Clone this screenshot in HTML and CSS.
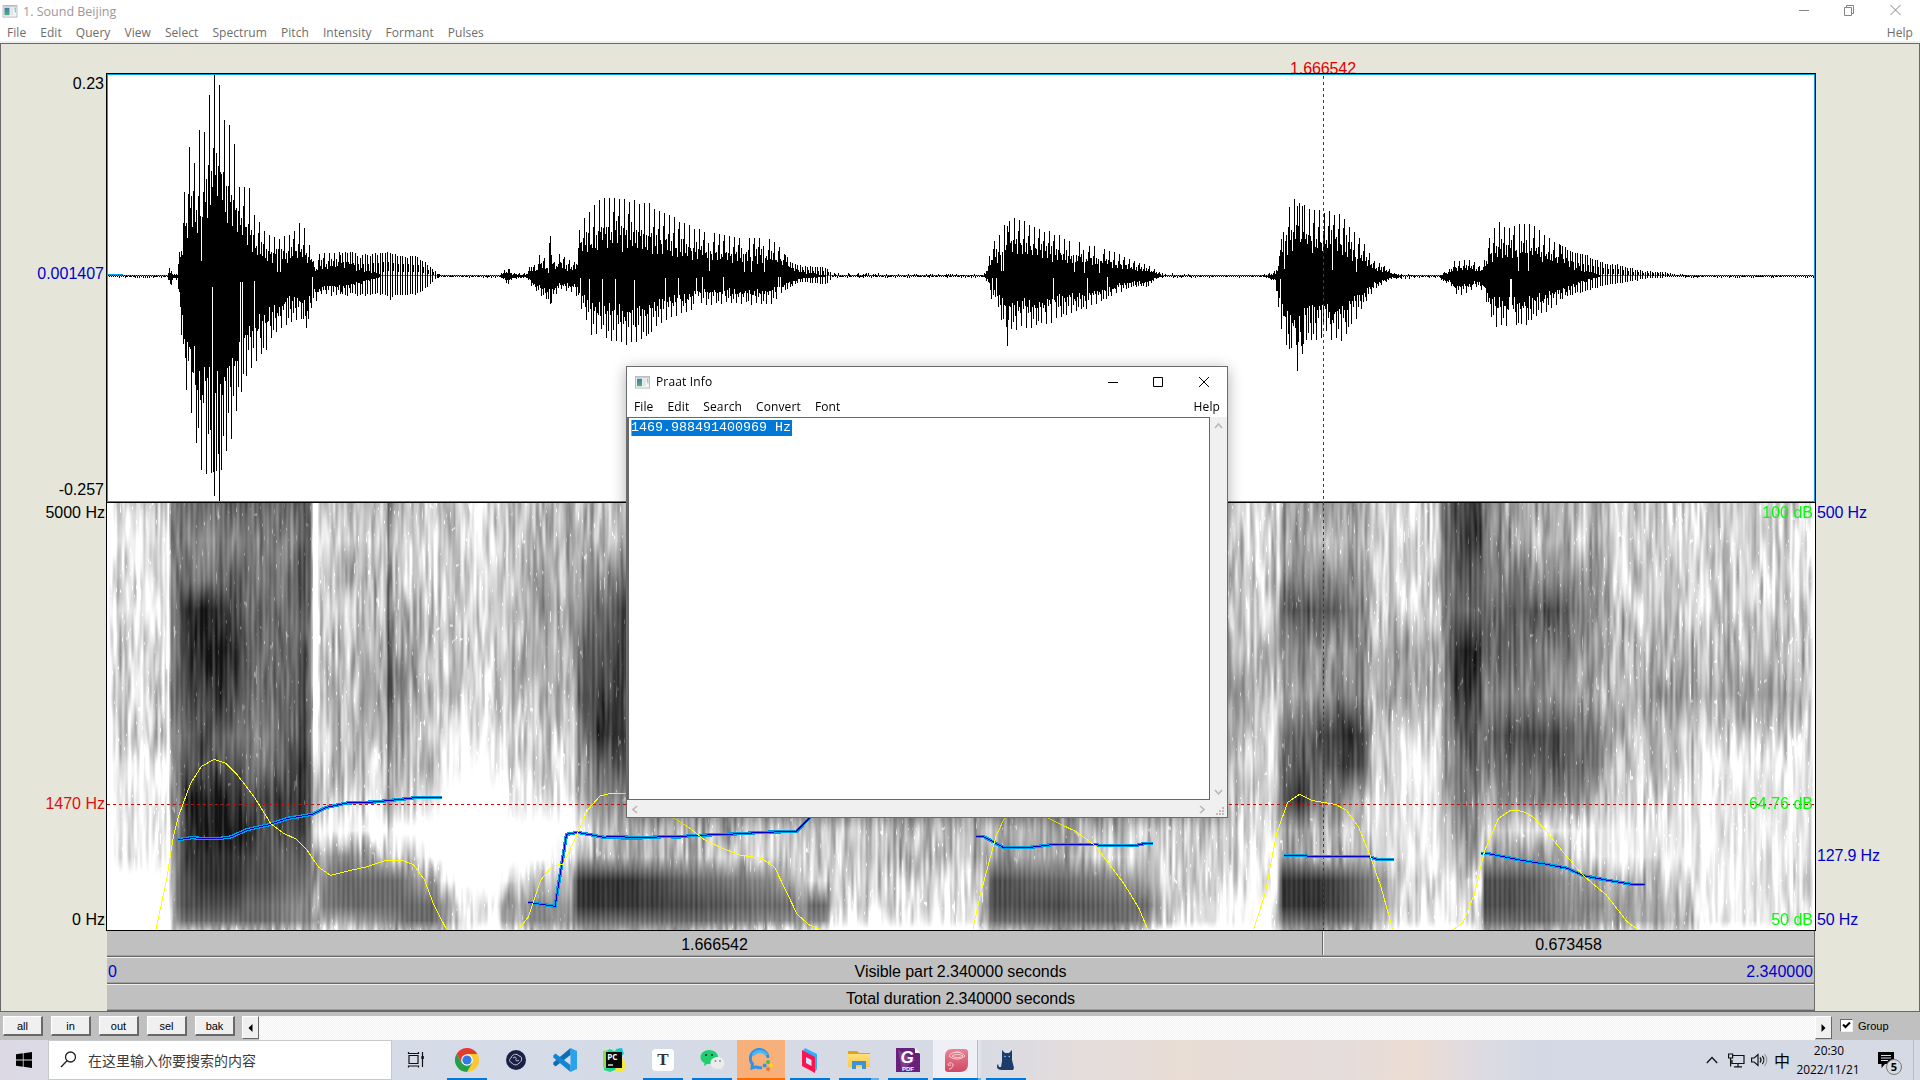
FILE: index.html
```html
<!DOCTYPE html>
<html lang="zh-CN">
<head>
<meta charset="utf-8">
<title>1. Sound Beijing</title>
<link rel="stylesheet" href="styles.css">
</head>
<body>
<svg class="defs" width="0" height="0">
  <defs>
    <linearGradient id="screenGrad" x1="0" y1="0" x2="0" y2="1"><stop offset="0" stop-color="#4a78a8"/><stop offset="1" stop-color="#4fae86"/></linearGradient>
    <linearGradient id="folder" x1="0" y1="0" x2="0" y2="1"><stop offset="0" stop-color="#ffe07a"/><stop offset="1" stop-color="#fcc84a"/></linearGradient>
    <linearGradient id="pink" x1="0" y1="0" x2="0" y2="1"><stop offset="0" stop-color="#ea8292"/><stop offset="1" stop-color="#cf4a66"/></linearGradient>
    <symbol id="appicon" viewBox="0 0 16 14">
      <rect x=".5" y=".5" width="15" height="12.5" fill="#f3f5f5" stroke="#b4b8bb"/>
      <rect x="1" y="1" width="14" height="1.4" fill="#c9ced2"/>
      <rect x="2" y="3" width="5.5" height="8" fill="url(#screenGrad)"/>
      <rect x="8.5" y="3" width="3" height="8" fill="#dfe6e6"/>
      <path d="M12.5 3h1.8v5h-.8z" fill="#8cc1b4"/>
    </symbol>
  </defs>
</svg>

<header class="titlebar">
  <svg class="appicon" width="16" height="13"><use href="#appicon"/></svg>
  <span class="title">1. Sound Beijing</span>
  <svg class="winctl" width="104" height="12" viewBox="0 0 104 12" fill="none" stroke="#858585">
    <path d="M1 6.500h10M46.500 3.500h7v8h-7zM48.500 3.500v-2h7v8h-2M92.500 1l10 10M102.500 1l-10 10"/>
  </svg>
</header>
<nav class="menubar">
  <span>File</span><span>Edit</span><span>Query</span><span>View</span><span>Select</span><span>Spectrum</span><span>Pitch</span><span>Intensity</span><span>Formant</span><span>Pulses</span><span class="help">Help</span>
</nav>

<main class="editor">
  <div class="axis left">
    <div class="scale wave-scale"><span>0.23</span><span class="blue">0.001407</span><span>-0.257</span></div>
    <div class="scale spec-scale"><span>5000 Hz</span><span class="red freq">1470 Hz</span><span>0 Hz</span></div>
  </div>
  <div class="centre">
    <div class="cursor-time"><span>1.666542</span></div>
    <div class="plots">
      <canvas id="wave" width="1710" height="430"></canvas>
      <canvas id="spec" width="1710" height="428"></canvas>
      <svg class="tracks" viewBox="106 73 1710 858" width="1710" height="858" fill="none" shape-rendering="crispEdges">
        <path d="M107.500 74.500H1814.500V501.500H107.500z" stroke="#00a2e8"/>
        <path d="M106.500 930.500V73.500H1815.500V930.500zM106 502.500H1816" stroke="#000"/>
        <path d="M107 804.500H1815" stroke="#e00000" stroke-dasharray="3 3"/>
        <path d="M1323.500 76V930" stroke="#d40000" stroke-dasharray="3 3"/>
        <g transform="translate(0 480) scale(.40816 .33333)">
          <path class="halo" d="M437 1079L470 1073 490 1075 540 1075 565 1071 605 1049 660 1034 705 1015 765 1003 800 982 850 969 915 966 975 959 1025 952 1082 952M1294 1267L1360 1279 1388 1063 1415 1057 1480 1072 1568 1075"/>
          <path class="core" d="M437 1079L470 1073 490 1075 540 1075 565 1071 605 1049 660 1034 705 1015 765 1003 800 982 850 969 915 966 975 959 1025 952 1082 952M1294 1267L1360 1279 1388 1063 1415 1057 1480 1072 1568 1075"/>
          <path class="loud" d="M382 1348L408 1200 424 1075 437 1010 467 910 493 860 524 838 553 850 580 882 625 955 664 1032 695 1060 725 1077 752 1110 781 1162 810 1186 855 1172 900 1160 945 1141 985 1141 1013 1154 1040 1200 1063 1275 1094 1348M1271 1348L1295 1310 1325 1200 1353 1158 1380 1152 1415 1060 1440 990 1470 948 1495 940 1533 940"/>
        </g>
        <g transform="translate(560 760) scale(.43367 .33333)">
          <path class="halo" d="M105 231H150L180 234 240 230 275 231 300 227 400 222 470 217 545 214 577 172M960 229L977 230 1022 262 1085 262 1140 253 1230 253 1245 256 1330 256 1350 250 1368 250"/>
          <path class="core" d="M105 231H150L180 234 240 230 275 231 300 227 400 222 470 217 545 214 577 172M960 229L977 230 1022 262 1085 262 1140 253 1230 253 1245 256 1330 256 1350 250 1368 250"/>
          <path class="loud" d="M240 160L262 174 300 205 335 241 375 265 415 285 465 295 495 322 520 390 547 463 575 495 597 507 615 508M952 508L970 400 1005 230 1025 174M1125 174L1190 215 1235 258 1300 370 1335 445 1355 508 1370 508"/>
        </g>
        <g transform="translate(1200 480) scale(.45918 .33333)">
          <path class="halo" d="M183 1126L230 1127 235 1129 365 1129 385 1138 423 1138M612 1120L625 1120 700 1141 755 1153 800 1165 835 1187 880 1199 940 1213 970 1213"/>
          <path class="core" d="M183 1126L230 1127 235 1129 365 1129 385 1138 423 1138M612 1120L625 1120 700 1141 755 1153 800 1165 835 1187 880 1199 940 1213 970 1213"/>
          <path class="loud" d="M117 1348L142 1240 167 1060 191 967 217 943 245 962 295 973 318 990 345 1040 370 1125 395 1225 420 1350M550 1350L573 1328 598 1240 620 1112 650 1015 677 990 702 994 725 1010 750 1047 790 1115 835 1187 885 1245 930 1325 955 1350"/>
        </g>
      </svg>
      <div class="scale spec-scale db"><span>100 dB</span><span class="freq">64.76 dB</span><span>50 dB</span></div>
    </div>
    <div class="timebars">
      <div class="bar split"><span>1.666542</span><span>0.673458</span></div>
      <div class="bar whole"><span class="blue">0</span><span>Visible part 2.340000 seconds</span><span class="blue end">2.340000</span></div>
      <div class="bar"><span>Total duration 2.340000 seconds</span></div>
    </div>
  </div>
  <div class="axis right">
    <div class="scale spec-scale blue"><span>500 Hz</span><span class="f0">127.9 Hz</span><span>50 Hz</span></div>
  </div>
</main>

<section class="controls">
  <button>all</button><button>in</button><button>out</button><button>sel</button><button>bak</button>
  <div class="scroll">
    <i class="arrow"><svg width="5" height="8"><path d="M4.500 0v8L.5 4z"/></svg></i>
    <div class="track"></div>
    <i class="arrow"><svg width="5" height="8"><path d="M.5 0v8l4-4z"/></svg></i>
  </div>
  <label class="group"><span class="check"><svg width="9" height="9" viewBox="0 0 9 9"><path d="M1 3.500l2.500 2.500L8 1.500" fill="none" stroke="#000" stroke-width="2"/></svg></span>Group</label>
</section>

<footer class="taskbar">
  <div class="start"><svg width="16" height="16"><path d="M0 2.300l6.800-1v6.300H0zM7.600 1.200L16 0v7.600H7.600zM0 8.400h6.800v6.300L0 13.700zM7.600 8.400H16V16l-8.400-1.200z"/></svg></div>
  <div class="search">
    <svg width="17" height="17" fill="none" stroke="#222" stroke-width="1.300"><circle cx="10.500" cy="6" r="5"/><path d="M7 9.700L1 16"/></svg>
    <span>在这里输入你要搜索的内容</span>
  </div>
  <div class="task view"><svg width="18" height="18" viewBox="0 0 18 18" fill="none" stroke="#111" stroke-width="1.200"><path d="M2 4.500h9v8H2zM1.500 1v1.500h10V1M1.500 16.500V15h10v1.500M15.500 1v15"/><rect x="14.400" y="5" width="2.400" height="3" fill="#111" stroke="none"/></svg></div>
  <div class="tasks">
    <div class="task run"><svg width="24" height="24" viewBox="0 0 24 24"><path d="M22.400 6A12 12 0 0 1 12 24L17.200 15 17.200 9 12 6z" fill="#fcc934"/><path d="M1.600 6A12 12 0 0 0 12 24L17.200 15H12L6.800 15z" fill="#24a148"/><path d="M12 6h10.400A12 12 0 0 0 1.600 6l5.200 9z" fill="#e33b2e"/><circle cx="12" cy="12" r="5.800" fill="#fff"/><circle cx="12" cy="12" r="4.600" fill="#2f7bea"/></svg></div>
    <div class="task"><svg width="22" height="22" viewBox="0 0 22 22" fill="none"><circle cx="11" cy="11" r="10" fill="#1a2145"/><path d="M6 9c1-4 6-5 8-2 4 0 3 6 0 7-2 3-6 2-7 0-3-1-3-4-1-5z" stroke="#c5cae0"/><path d="M8 9c2-2 4 0 3 1s1 3 3 1" stroke="#c5cae0"/></svg></div>
    <div class="task"><svg width="24" height="24" viewBox="0 0 24 24"><path d="M17.500 0L24 3v18l-6.500 3z" fill="#29a3ec"/><path d="M17.500 0v7L2.500 18.500.3 16.600v-2z" fill="#0b6db5"/><path d="M17.500 24v-7L2.500 5.500.3 7.400v2z" fill="#1286d4"/></svg></div>
    <div class="task"><svg width="24" height="24" viewBox="0 0 24 24"><path d="M1 4l7-3 4 2 6-3 3 6-2 4 4 8-3 5-7-1-5 2-6-2z" fill="#21d789"/><path d="M1 3l5-1-2 19-3-2z" fill="#8be04a"/><path d="M16 8l6 3 2 8-3 5-8-1z" fill="#f3ea3a"/><path d="M14 1l6-1 2 6-5 2z" fill="#15c5d8"/><rect x="4" y="4" width="16" height="16" fill="#080808"/><text x="5.200" y="12" class="pc">PC</text><path d="M6 17h5" stroke="#fff" stroke-width="1.300"/></svg></div>
    <div class="task run"><span class="typora">T</span></div>
    <div class="task run"><svg width="25" height="22" viewBox="0 0 25 22"><path d="M9 1c5 0 9 3 9 7s-3 7-9 7l-2 0-3 2 .5-3C2 13 .5 11 .5 8c0-4 4-7 8.500-7z" fill="#1fcf6d"/><circle cx="6" cy="6" r="1.100" fill="#135"/><circle cx="12" cy="6" r="1.100" fill="#135"/><path d="M17.500 8c4 0 7 2.500 7 6 0 2-1 3.500-2.500 4.500l.4 2.300-2.400-1.200c-6 1.400-9.500-1.600-9.500-5.600 0-3.500 3-6 7-6z" fill="#ececec"/><circle cx="15.500" cy="12" r=".9" fill="#888"/><circle cx="20" cy="12" r=".9" fill="#888"/></svg></div>
    <div class="task run alert"><svg width="25" height="24" viewBox="0 0 25 24" fill="none"><path d="M13 19.500c-2 .5-4 .3-6-.7L3 20l.5-4A8.800 8.800 0 1 1 19 10" stroke="#2f93ea" stroke-width="3"/><path d="M4 7a8.800 8.800 0 0 1 14 0" stroke="#45b8f5" stroke-width="3"/><circle cx="19" cy="14" r="2" fill="#49c14a"/><circle cx="22.300" cy="17.500" r="2" fill="#ffcf29"/><circle cx="19" cy="21" r="2" fill="#f4742b"/><circle cx="15.700" cy="17.500" r="2" fill="#2f93ea"/></svg></div>
    <div class="task run"><svg width="18" height="25" viewBox="0 0 18 25"><path d="M1 4L4 0l12 6v15l-3 4z" fill="#2bb2ff"/><path d="M1 2l13 7v16L1 18z" fill="#ff1450"/><path d="M5 9l5.500 3v6L5 15z" fill="#cfeaff"/></svg></div>
    <div class="task run many"><svg width="22" height="20" viewBox="0 0 22 20"><path d="M0 1h9l2 2h11v4H0z" fill="#e0a21b"/><path d="M0 4h22v13H0z" fill="url(#folder)"/><path d="M4 19v-8h14v8h-4v-4H8v4z" fill="#3c94d8"/></svg></div>
    <div class="task run"><svg width="24" height="24" viewBox="0 0 24 24"><path d="M0 0h18l6 6v18H0z" fill="#68217a"/><path d="M2 2l17 10L6 22z" fill="#823d92"/><path d="M19 0l5 5h-5z" fill="#fff"/><text x="4.500" y="15" class="foxg">G</text><text x="6" y="23" class="foxp">PDF</text></svg></div>
    <div class="task run active"><svg width="23" height="23" viewBox="0 0 23 23"><path d="M7 0h13c2 0 3 1 3 3v12c0 5-3 8-8 8H3c-2 0-3-1-3-3V8c0-5 2-8 7-8z" fill="url(#pink)"/><g fill="none" stroke="#fbd0d6"><path d="M4 7c3-5 12-5 16 0-4 4-12 4-16 0zM7 7c3-2 8-2 11 0-3 2-8 2-11 0zM9 4c3-2 6-1 7 0"/><path d="M4 20c4 0 2-2 4-3 1-3-4-5-5-1 1 1 2 0 3 0"/></g></svg></div>
    <div class="task run"><svg width="17" height="20" viewBox="0 0 17 20"><path d="M5 0l3 3h4l3-3v10l2 8-1 2H5c-3 0-5-1-5-3 0-1 0-2 1-3l1 3 2 0 1-6z" fill="#1c3d69"/><circle cx="8" cy="6.500" r=".8" fill="#8fd0ff"/><circle cx="12.300" cy="6.500" r=".8" fill="#8fd0ff"/></svg></div>
  </div>
  <div class="tray">
    <svg width="12" height="8" fill="none" stroke="#111" stroke-width="1.300"><path d="M.8 7L6 1.500 11.200 7"/></svg>
    <svg width="17" height="15" fill="none" stroke="#111" stroke-width="1.200"><path d="M5 2.500h11v8H4V7M10 10.500v3M6 13.800h8M.6 1h4v4h-4zM2.600 5v8.500"/></svg>
    <svg width="17" height="14" fill="none" stroke="#111" stroke-width="1.200"><path d="M.6 5h2.600L7 1.500v11L3.200 9H.6zM9 4.500c1.300 1.500 1.300 3.500 0 5M11.300 3c2 2.300 2 5.700 0 8"/><path d="M13.500 1.200c3 3.200 3 8.400 0 11.600" stroke="#999"/></svg>
    <span class="ime">中</span>
    <div class="clock"><span>20:30</span><span>2022/11/21</span></div>
    <div class="notes"><svg width="17" height="16"><path d="M0 0h16v12H7l-3.500 4v-4H0z"/><path d="M3 3.500h10M3 6h10M3 8.500h7" stroke="#dde"/></svg><b>5</b></div>
  </div>
</footer>

<section class="dialog">
  <header>
    <svg class="appicon" width="15" height="13"><use href="#appicon"/></svg>
    <span>Praat Info</span>
    <svg class="winctl" width="98" height="12" viewBox="0 0 98 12" fill="none" stroke="#000"><path d="M0 6.500h10M45.500 1.500h9v9h-9zM91 1l10 10M101 1l-10 10" transform="translate(-5 0)"/></svg>
  </header>
  <nav><span>File</span><span>Edit</span><span>Search</span><span>Convert</span><span>Font</span><span class="help">Help</span></nav>
  <div class="body">
    <div class="text"><mark>1469.988491400969 Hz</mark></div>
    <div class="vbar"><svg width="9" height="6"><path d="M1 5l3.500-4L8 5"/></svg><svg width="9" height="6"><path d="M1 1l3.500 4L8 1"/></svg></div>
    <div class="hbar"><svg width="6" height="9"><path d="M5 1L1 4.500 5 8"/></svg><svg width="6" height="9"><path d="M1 1l4 3.500L1 8"/></svg></div>
    <div class="grip"><svg width="9" height="9" fill="#bdbdbd"><path d="M6 0h2v2H6zM3 3h2v2H3zM6 3h2v2H6zM0 6h2v2H0zM3 6h2v2H3zM6 6h2v2H6z"/></svg></div>
  </div>
</section>
<script src="plot.js"></script>
</body>
</html>
```

FILE: styles.css
```css
* { box-sizing: border-box; }
body { margin: 0; width: 1920px; height: 1080px; overflow: hidden; display: flex; flex-direction: column; background: #fff; font: 12px/16px "Open Sans", "Noto Sans CJK SC", sans-serif; position: relative; }
.defs { position: absolute; }
svg, canvas { display: block; flex: none; }

.titlebar { height: 22px; display: flex; align-items: center; padding: 0 20px 0 2px; color: #999; }
.title { margin-left: 5px; font-size: 12.5px; padding-top: 2px; }
.titlebar .winctl { margin-left: auto; margin-right: -2px; margin-bottom: 2px; }
.menubar { height: 21px; display: flex; gap: 14px; padding: 3px 7px 0; color: #6d6d6d; border-bottom: 2px solid #f0f0f0; letter-spacing: .06px; }
.help { margin-left: auto; }

.editor { height: 969px; display: grid; grid-template-columns: 105px 1710px 1fr; background: #e5e6d9; border: 1px solid #696969; font: 16px/18px "Liberation Sans", Arial, sans-serif; color: #000; }
.blue { color: #0000cd; }
.red { color: #dc1010; }
.axis { padding-top: 30px; }
.scale { display: flex; flex-direction: column; justify-content: space-between; }
.left .scale { align-items: flex-end; padding-right: 2px; }
.wave-scale { height: 428px; padding-bottom: 3px; }
.wave-scale .blue { margin-bottom: 27px; }
.spec-scale { height: 428px; padding: 1px 0 1px; position: relative; }
.left .spec-scale { padding-right: 1px; }
.spec-scale .freq, .spec-scale .f0 { position: absolute; top: 293px; }
.left .freq { right: 1px; }
.left .scale span:first-child { margin-top: 1px; }
.spec-scale .f0 { top: 344px; }
.right { padding: 459px 0 0 1px; }
.right .scale { letter-spacing: -.15px; padding-bottom: 2px; }
.cursor-time { height: 29px; overflow: hidden; padding: 16px 0 0 1184px; color: #e00000; letter-spacing: -.1px; }
.cursor-time span { display: block; }
.plots { position: relative; background: #fff; }
.tracks { position: absolute; left: 0; top: 0; }
.tracks path { vector-effect: non-scaling-stroke; }
.halo { stroke: #00a0e6; stroke-width: 3.4px; }
.core { stroke: #0000c8; stroke-width: 1px; }
.loud { stroke: #ffff00; stroke-width: 1px; }
.db { position: absolute; right: 3px; top: 430px; padding-bottom: 2px; align-items: flex-end; color: #00ff00; }
.db .freq { right: 0; top: 292px; white-space: nowrap; }
.timebars { margin-left: 1px; background: #c0c0c0; height: 80px; width: 1708px; border-right: 1px solid #696969; }
.bar { height: 27px; text-align: center; line-height: 23px; border-bottom: 1px solid #696969; box-shadow: inset 0 -1px #a0a0a0, 0 1px #f0f0f0; letter-spacing: -.08px; }
.bar:first-child { height: 26px; letter-spacing: 0; }
.bar:last-child { box-shadow: inset 0 -1px #a0a0a0; }
.bar.split { display: grid; grid-template-columns: 1216px 1fr; line-height: 28px; }
.split span:first-child { border-right: 1px solid #696969; box-shadow: 1px 0 #f0f0f0; height: 24px; }
.bar:not(.split) { padding-top: 3px; }
.whole { display: grid; grid-template-columns: 100px 1fr 100px; }
.whole .blue { text-align: left; padding-left: 1px; letter-spacing: 0; }
.whole .blue.end { text-align: right; padding-right: 1px; }

.controls { height: 28px; background: #c0c0c0; display: flex; padding: 4px 0 0 3px; font: 11px/16px "Liberation Sans", Arial, sans-serif; }
.controls button { width: 40px; height: 20px; margin: 0 8px 0 0; padding: 0; font: inherit; line-height: 16px; background: #f0f0f0; border: 2px solid; border-color: #fff #696969 #696969 #fff; border-width: 1px 2px 2px 1px; color: #000; }
.scroll { display: flex; width: 1590px; margin-left: -1px; }
.arrow { width: 17px; height: 23px; background: #f0f0f0; border: 1px solid; border-color: #fff #696969 #696969 #fff; display: grid; place-items: center; }
.track { flex: 1; height: 24px; background: repeating-conic-gradient(#fff 0 25%, #f1f1f1 0 50%) 0 0 / 2px 2px; }
.group { display: flex; align-items: flex-start; gap: 5px; margin-left: 8px; padding-top: 2px; }
.check { width: 13px; height: 13px; margin-top: 1px; background: #fff; border: 1px solid; border-color: #696969 #eee #eee #696969; display: grid; place-items: center; }

.taskbar { height: 40px; display: flex; background: linear-gradient(90deg, #dcd9e4 0, #d5dce7 400px, #d5dae5 960px, #e2dcdd 1060px, #e9ddd5 1180px, #e4dcdb 1340px, #ecddd3 1410px, #dddbe2 1480px, #d3d8e4 1540px, #d6dae4 100%); }
.start { width: 48px; padding: 12px 0 0 16px; }
.search { width: 344px; background: #fff; border: 1px solid #c6c8cc; display: flex; align-items: center; gap: 11px; padding-left: 11px; font: 14px/20px "Noto Sans CJK SC", sans-serif; color: #3c3c3c; }
.search svg { margin-bottom: 2px; }
.task { width: 48px; height: 40px; display: grid; place-items: center; position: relative; }
.view { margin-right: 3px; }
.tasks { display: flex; gap: 1px; }
.run::after { content: ""; position: absolute; left: 4px; right: 4px; bottom: 0; height: 2px; background: #0078d7; }
.alert { background: #f7b07a; }
.alert::after { left: 0; right: 0; background: #ff6d00; }
.many::after { right: 4px; background: linear-gradient(90deg, #0078d7 32px, #66aee6 32px); }
.active { background: linear-gradient(90deg, #eef0f5 44px, #b9bec8 44px 45px, #dfe3ea 45px); }
.active::after { left: 0; right: 0; background: linear-gradient(90deg, #0078d7 45px, #66aee6 45px); }
.active svg { margin-right: 1px; }
.tasks .task:last-child svg { margin-right: 2px; }
.typora { width: 22px; height: 22px; border-radius: 4px; background: #fff; font: bold 17px/22px "Liberation Serif", serif; text-align: center; color: #333; }
.pc { font: bold 8px "Open Sans", sans-serif; fill: #fff; }
.foxg { font: italic bold 17px "Liberation Sans", sans-serif; fill: #fff; }
.foxp { font: bold 6px "Liberation Sans", sans-serif; fill: #fff; }
.tray { margin-left: auto; width: 214px; display: flex; align-items: center; }
.tray > svg:nth-child(2) { margin-left: 10px; }
.tray > svg:nth-child(3) { margin-left: 6px; }
.ime { font: 16px/20px "Noto Sans CJK SC", sans-serif; margin-left: 6px; }
.clock { width: 66px; margin-left: 5px; display: flex; flex-direction: column; align-items: center; gap: 3px; font-size: 11.9px; white-space: nowrap; padding-bottom: 2px; }
.clock span:first-child { padding-left: 2px; }
.notes { position: relative; margin-left: 17px; width: 36px; height: 40px; padding-top: 12px; border-right: 1px solid #b8bcc6; }
.notes b { position: absolute; left: 8px; top: 19px; width: 16px; height: 16px; border-radius: 50%; border: 1px solid #777; background: #d9dbe2; font-size: 11px; line-height: 14px; text-align: center; }

.dialog { position: absolute; left: 626px; top: 366px; width: 602px; height: 452px; background: #fff; border: 1px solid #6c6c6c; box-shadow: 0 3px 14px rgba(0,0,0,.32); display: flex; flex-direction: column; color: #000; }
.dialog header { height: 30px; display: flex; align-items: center; padding: 0 16px 0 8px; letter-spacing: .15px; }
.dialog header span { margin-left: 6px; }
.dialog header .winctl { margin-left: auto; overflow: visible; }
.dialog nav { height: 20px; display: flex; gap: 14px; padding: 2px 7px 0; letter-spacing: .12px; }
.body { flex: 1; display: grid; grid-template: 384px 1fr / 583px 1fr; background: #f0f0f0; }
.text { background: #fff; border: 1px solid #696969; border-left-width: 2px; padding: 1px 0 0 2px; margin-bottom: 1px; }
mark { display: inline-block; background: #0078d7; color: #fff; font: 13.333px/16px "Liberation Mono", "Courier New", monospace; box-shadow: inset 1px 0 #ff8728; padding-right: 1px; height: 16px; }
.vbar { display: flex; flex-direction: column; justify-content: space-between; align-items: center; padding: 6px 0 6px; }
.hbar { display: flex; justify-content: space-between; align-items: center; padding: 0 5px 0 5px; }
.vbar path, .hbar path { fill: none; stroke: #b8b8b8; stroke-width: 1.6; }
.grip { display: flex; align-items: flex-end; justify-content: flex-end; padding: 0 2px 1px 0; }
```

FILE: plot.js
```js
// All x/y data below are in window pixels; the plot's origin is (OX, OY).
const OX = 106, OY = 73, ZERO = 276;

function hash(x, y) {
  let h = Math.imul(x, 374761393) + Math.imul(y, 668265263);
  h = Math.imul(h ^ (h >>> 13), 1274126177);
  return ((h ^ (h >>> 16)) >>> 0) / 4294967296;
}
function lerpTable(t, x) {
  let i = 0;
  while (i < t.length - 4 && t[i + 2] < x) i += 2;
  const f = Math.max(0, Math.min(1, (x - t[i]) / (t[i + 2] - t[i])));
  return t[i + 1] + (t[i + 3] - t[i + 1]) * f;
}

// ---- waveform: envelope above and below zero ----
const above = [107,1,167,1,169,8,171,8,173,2,177,4,179,25,184,88,189,129,194,116,199,146,204,146,209,181,214,203,219,191,224,158,229,151,234,132,238,90,249,89,252,62,258,60,262,46,268,44,277,38,290,43,299,54,304,48,307,32,312,32,314,9,319,23,350,25,360,21,389,26,400,22,418,20,427,12,436,4,442,1,495,1,500,3,508,9,512,3,526,3,531,13,536,10,540,26,546,15,550,40,554,15,560,25,565,18,575,14,580,58,590,65,598,77,608,82,622,79,650,73,660,65,680,57,695,48,720,44,735,40,770,39,780,29,790,15,800,11,825,9,832,3,880,2,980,1,985,4,988,16,992,35,998,40,1002,53,1013,61,1024,57,1035,50,1055,43,1070,36,1090,32,1110,26,1130,18,1140,13,1150,10,1160,3,1190,1,1262,1,1275,5,1279,20,1281,70,1287,62,1292,80,1298,77,1304,74,1315,66,1327,66,1337,64,1345,60,1350,50,1355,45,1361,38,1367,28,1373,17,1385,10,1392,4,1412,1,1438,1,1443,4,1450,8,1454,16,1472,16,1480,10,1485,18,1488,36,1493,47,1499,54,1510,50,1522,54,1535,53,1545,42,1560,32,1572,26,1590,20,1605,14,1620,12,1635,7,1645,5,1660,5,1672,2,1690,1,1815,1];
const below = [107,1,167,1,170,13,173,3,177,4,179,30,181,62,184,110,189,135,195,170,200,190,205,212,210,213,214,219,218,200,225,196,231,170,240,120,255,92,267,75,277,56,285,52,300,42,303,55,307,55,312,28,318,24,321,20,385,20,390,26,395,21,418,20,427,12,436,3,442,1,500,1,508,9,512,3,526,2,531,10,540,20,551,28,560,14,575,18,583,40,590,60,600,58,610,68,637,72,648,65,655,52,665,46,680,40,700,30,730,28,770,30,785,15,800,6,825,9,832,2,880,1,984,1,988,9,992,30,1000,42,1005,52,1012,55,1024,54,1040,52,1060,44,1090,32,1110,22,1130,12,1148,11,1155,3,1170,1,1262,1,1275,6,1280,55,1286,73,1292,75,1303,78,1308,65,1315,68,1325,60,1332,68,1345,65,1350,52,1360,38,1367,25,1373,15,1380,10,1390,3,1438,1,1443,6,1450,8,1455,20,1465,19,1475,12,1483,15,1488,37,1496,52,1510,50,1521,52,1530,48,1545,38,1553,32,1565,22,1580,18,1600,11,1615,8,1635,5,1650,2,1680,1,1815,1];
const hollow = [[340, 437], [785, 832], [1560, 1690]];
// single glottal spikes that stand out of the envelope: x, above, below
const spikes = [[189,129,60],[199,146,90],[209,181,90],[214,202,220],[219,191,226],[224,156,100],[229,151,90],[234,132,90],[550,40,28],[1007,50,70],[1297,70,95],[1289,40,73],[1302,70,78]];

const wave = document.getElementById('wave').getContext('2d');
wave.fillStyle = '#fff';
wave.fillRect(0, 0, 1710, 430);
wave.fillStyle = '#00a2e8';
wave.fillRect(0, 275 - OY, 1710, 1);
wave.fillRect(1, 274 - OY, 16, 1);
wave.fillStyle = '#000';
const upShape = [1, .48, .6, .38, .68], downShape = [.5, .62, 1, .55, .76];
for (let x = 108; x < 1814; x++) {
  const a = lerpTable(above, x), b = lerpTable(below, x);
  const open = hollow.find(r => x >= r[0] && x < r[1]);
  const p = (x + 1) % 5, r1 = hash(x, 1), r2 = hash(x, 2);
  let t, d;
  if (a < 3 && b < 3) {
    t = x % 2 ? 0 : 1;
    d = x % 2 ? 1 : 0;
    if (r1 < .25) t += a - .5;
    if (r2 < .25) d += b - .5;
  } else if (open) {
    // pulses separate gradually: the filled core shrinks over the first 45 px
    const q = x % 5, fill = Math.max(0, .55 * (1 - (x - open[0]) / 45));
    if (q === 0 || q === 2) {
      t = a * (.85 + .15 * r1);
      d = b * (.85 + .15 * r2);
    } else if (q === 3) {
      t = a * .55;
      d = b * (fill > .05 ? fill : -.2);
    } else {
      if (fill < .05) continue;
      t = a * fill * (.6 + .8 * r1);
      d = b * fill * (.8 + .8 * r2);
    }
  } else {
    t = a * (p === 0 ? .94 + .06 * r1 : upShape[p] * (.8 + .4 * r1));
    d = b * (p === 2 ? .9 + .1 * r2 : downShape[p] * (.8 + .4 * r2));
    if (a > 25 && r1 > .965) d = b * .05;
    if (a > 25 && r2 > .965) t = a * .1;
  }
  const y0 = Math.round(ZERO - t), y1 = Math.round(ZERO + d);
  wave.fillRect(x - OX, y0 - OY, 1, Math.max(1, y1 - y0));
}
for (const [x, up, down] of spikes) wave.fillRect(x - OX, ZERO - up - OY, 1, up + down);

// ---- spectrogram: energy (0-9) sampled on a coarse time/frequency grid ----
const rows = [503, 540, 580, 610, 650, 695, 735, 765, 800, 830, 856, 880, 905, 920, 930];
const grid = [
  [107,'000000000000000'],[110,'111111100000000'],[119,'212122211110000'],[165,'211122211110000'],[168,'000000000000000'],
  [171,'555555444433321'],[178,'656666555556653'],[185,'656887679887763'],[205,'656998779988763'],[225,'656898679988763'],
  [238,'656787678988763'],[245,'656676567877663'],[265,'655666557777663'],[290,'656666678766553'],[304,'767777788876553'],
  [310,'666666677665553'],[313,'000000012233342'],[317,'000000012233342'],[320,'323334332145542'],[345,'323233332156642'],
  [386,'323334322036653'],[388,'656677655336653'],[391,'545567544236653'],[394,'322344432026653'],[410,'322344332025663'],
  [432,'222333221003663'],[445,'222222110001442'],[460,'222222110000221'],[480,'222221100000110'],[495,'222222110000100'],
  [505,'332333221001441'],[515,'322333221001331'],[530,'334433221003553'],[545,'334443221003553'],[560,'333433211013442'],
  [570,'444443221013442'],[578,'344566543148864'],[600,'335678865338864'],[625,'336887874338864'],[700,'333333333336763'],
  [760,'333333333325652'],[790,'333333333234652'],[801,'333333333223442'],[810,'333333333222651'],[826,'333333333222651'],
  [833,'333333333222210'],[900,'333333333332210'],[975,'222222222332110'],[985,'333333333233431'],[992,'444444444347763'],
  [1060,'444444444336764'],[1120,'333333333325663'],[1147,'333333333234652'],[1158,'333333333222320'],[1195,'222222222222110'],
  [1230,'222234322222110'],[1268,'222233222111000'],[1276,'222233222211221'],[1282,'444654666458864'],[1300,'445754678448864'],
  [1320,'436745765338864'],[1345,'434645884237763'],[1362,'334555873236653'],[1372,'222333321125542'],[1385,'222244221114431'],
  [1400,'222244211112210'],[1438,'222233211112110'],[1442,'555544432221110'],[1455,'776687655432110'],[1467,'887698766541110'],
  [1480,'776687665431221'],[1484,'555665653247764'],[1510,'445665765247764'],[1545,'335755765146663'],[1560,'335755775135553'],
  [1575,'335654665124553'],[1600,'334443552114542'],[1610,'222333332113442'],[1640,'222234322113442'],[1690,'222234221112332'],
  [1702,'222234211111110'],[1790,'222234211111110'],[1806,'222233211112110'],[1811,'111112111111110'],[1815,'000000000000000']
];
function gridColumn(x) {
  let i = 0;
  while (i < grid.length - 2 && grid[i + 1][0] < x) i++;
  const a = grid[i], b = grid[i + 1];
  const f = Math.max(0, Math.min(1, (x - a[0]) / (b[0] - a[0])));
  return rows.map((_, k) => +a[1][k] + (b[1][k] - a[1][k]) * f);
}
const clamp = (v, lo, hi) => Math.max(lo, Math.min(hi, v));
const smooth = t => t * t * (3 - 2 * t);
// value noise with separate horizontal and vertical grain
function noise(x, y, sx, sy, seed) {
  const ix = Math.floor(x / sx), fx = smooth(x / sx - ix);
  const at = c => {
    const yy = y / sy + hash(c, seed + 9) * 7, iy = Math.floor(yy), fy = smooth(yy - iy);
    const k = c * 31 + seed * 1009;
    return hash(k, iy) * (1 - fy) + hash(k, iy + 1) * fy;
  };
  return at(ix) * (1 - fx) + at(ix + 1) * fx - .5;
}
const spec = document.getElementById('spec').getContext('2d');
const img = spec.createImageData(1710, 428);
for (let px = 0; px < 1710; px++) {
  const x = px + OX, col = gridColumn(x);
  const pulse = Math.cos(2 * Math.PI * x / 4.9);
  for (let py = 0, k = 0; py < 428; py++) {
    const y = py + 503;
    while (k < rows.length - 2 && rows[k + 1] < y) k++;
    const f = (y - rows[k]) / (rows[k + 1] - rows[k]);
    let v = col[k] * (1 - f) + col[k + 1] * f;
    const voiced = clamp((v - 3) / 2.5, 0, 1);
    const low = clamp((y - 835) / 40, 0, 1) * voiced;
    const amp = Math.min(v * 1.7, 2.4 - voiced * 1.1) * (1 - low * .75);
    v += (noise(x, y, 3, 34, 1) * 1.6 + noise(x, y, 2, 20, 2) * .6 + noise(x, y, 2.4, 260, 3) * .9) * amp * .85;
    v += pulse * .4 * voiced;
    const s = noise(x, y, 2, 8, 5);
    if (s > .4) v -= (s - .4) * 26 * (1 - low);
    const g = clamp(265 - v * 26.5, 18, 255);
    const o = (py * 1710 + px) * 4;
    img.data[o] = img.data[o + 1] = img.data[o + 2] = x < 109 || x > 1812 ? 255 : g;
    img.data[o + 3] = 255;
  }
}
spec.putImageData(img, 0, 0);
```
